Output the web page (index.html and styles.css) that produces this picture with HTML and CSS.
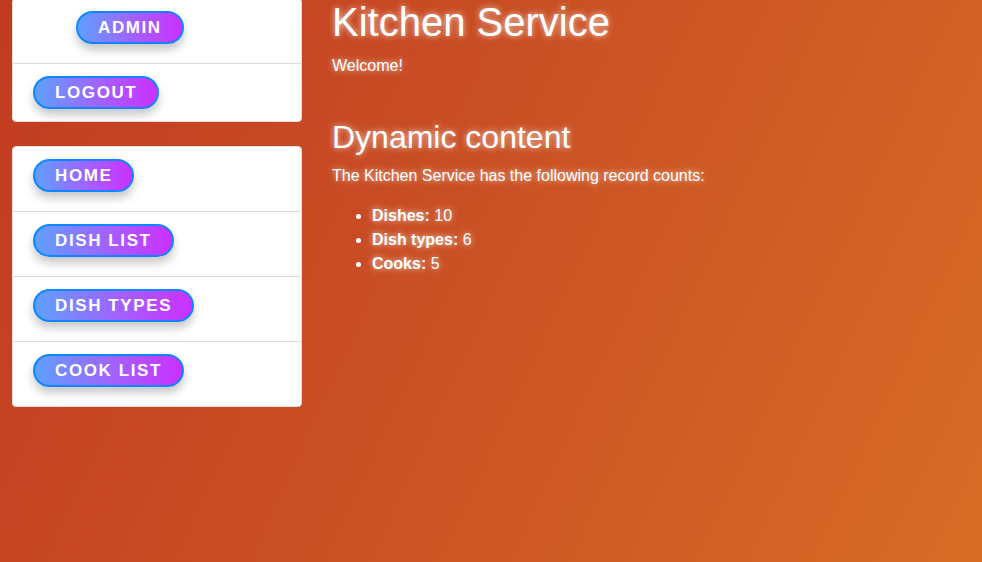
FILE: index.html
```html
<!DOCTYPE html>
<html lang="en">
<head>
<meta charset="utf-8">
<title>Kitchen Service</title>
<link rel="stylesheet" href="styles.css">
</head>
<body>
<div class="page">
  <aside class="sidebar">
    <ul class="card card-top">
      <li class="item"><a class="btn btn-admin" href="#">Admin</a></li>
      <li class="item item-short"><a class="btn" href="#">Logout</a></li>
    </ul>
    <ul class="card">
      <li class="item"><a class="btn" href="#">Home</a></li>
      <li class="item"><a class="btn" href="#">Dish list</a></li>
      <li class="item"><a class="btn" href="#">Dish types</a></li>
      <li class="item"><a class="btn" href="#">Cook list</a></li>
    </ul>
  </aside>
  <main class="content">
    <h1 class="title">Kitchen Service</h1>
    <p class="text">Welcome!</p>
    <h2 class="subtitle">Dynamic content</h2>
    <p class="text">The Kitchen Service has the following record counts:</p>
    <ul class="counts">
      <li><strong>Dishes:</strong> 10</li>
      <li><strong>Dish types:</strong> 6</li>
      <li><strong>Cooks:</strong> 5</li>
    </ul>
  </main>
</div>
</body>
</html>
```
FILE: styles.css
```css
* { box-sizing: border-box; }
html, body { height: 100%; }
body {
  margin: 0;
  font-family: "Liberation Sans", Arial, sans-serif;
  font-size: 16px;
  line-height: 1.5;
  color: #fff;
  background: linear-gradient(115deg, #c23b21 0%, #ca5024 45%, #d86c25 100%);
  overflow: hidden;
}
.page {
  display: flex;
  gap: 30px;
  padding-left: 12px;
  margin-top: -2px;
}
.sidebar {
  width: 290px;
  flex: none;
  display: flex;
  flex-direction: column;
  gap: 24px;
}
.card {
  list-style: none;
  margin: 0;
  padding: 0;
  background: #fff;
  border: 1px solid #dcdcdc;
  border-radius: 4px;
}
.item {
  padding: 12px 20px 19px;
  border-top: 1px solid #dcdcdc;
  height: 65px;
}
.item:first-child { border-top: none; height: 64px; }
.item-short { height: 58px; padding-bottom: 12px; }
.btn {
  display: inline-block;
  height: 33px;
  padding: 6px 20px 6px 20px;
  line-height: 17px;
  font-size: 17px;
  font-weight: bold;
  letter-spacing: 1.6px;
  text-transform: uppercase;
  color: #fff;
  text-decoration: none;
  border: 2px solid #0f85ff;
  border-radius: 17px;
  background: linear-gradient(to right, #5ea0ff 0%, #a460ff 55%, #cc30ff 100%);
  box-shadow: 0 6px 10px rgba(0, 0, 0, 0.22);
}
.btn-admin { margin-left: 43px; }
.content {
  flex: 1;
  text-shadow: 0 0 6px rgba(255, 255, 255, 0.75);
}
.title {
  margin: 0 0 8px;
  font-size: 40px;
  font-weight: normal;
  line-height: 1.2;
}
.subtitle {
  margin: 40px 0 8px;
  font-size: 32px;
  font-weight: normal;
  line-height: 1.2;
}
.text { margin: 0 0 16px; }
.counts {
  margin: 0;
  padding-left: 40px;
}
.counts strong { font-weight: bold; }
```
